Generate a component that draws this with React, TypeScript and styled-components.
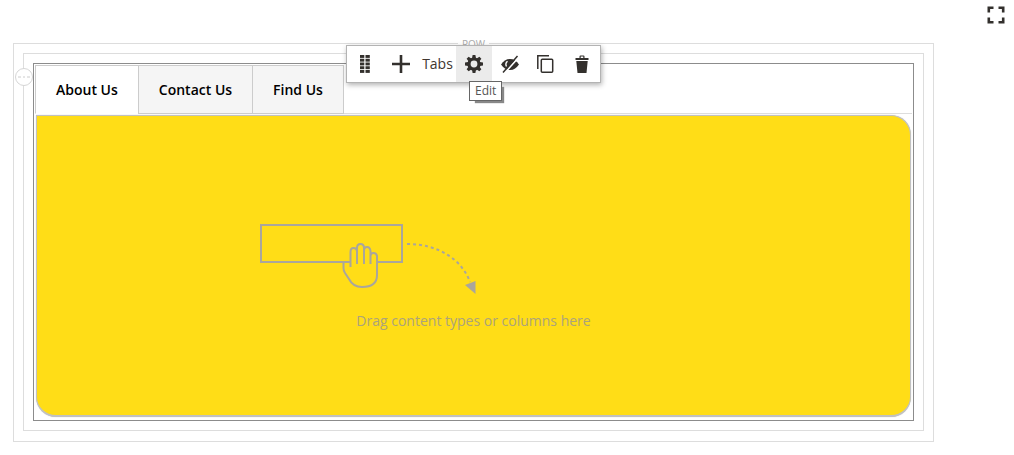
import React from "react";
import styled, { createGlobalStyle, css } from "styled-components";

const GlobalStyle = createGlobalStyle`
  *, *::before, *::after { box-sizing: border-box; }
  body {
    margin: 0;
    background: #fff;
    color: #41362f;
    font-family: "Open Sans", "Noto Sans", sans-serif;
    font-size: 14px;
    line-height: 20px;
  }
  button { font: inherit; color: inherit; cursor: pointer; }
  svg { display: block; }
`;

const Page = styled.main`
  padding: 5px 8px 14px 13px;
`;

const TopBar = styled.header`
  display: flex;
  justify-content: flex-end;
  height: 38px;
`;

const IconButton = styled.button<{ $active?: boolean }>`
  display: flex;
  align-items: center;
  justify-content: center;
  flex: none;
  width: 36px;
  height: 36px;
  padding: 0;
  border: 0;
  color: #33302d;
  background: ${(p) => (p.$active ? "#ebebeb" : "transparent")};
`;

const FullScreenButton = styled(IconButton)`
  width: 20px;
  height: 20px;
`;

const frame = css`
  position: relative;
  border: 1px solid #ddd;
`;

const RowFrame = styled.section`
  ${frame}
  margin-right: 72px;
  padding: 9px 9px 10px;
`;

const ColumnFrame = styled.div`
  ${frame}
  padding: 9px;
`;

const TabsFrame = styled.div`
  ${frame}
  border-color: #8c8c8c;
  padding: 1px 1px 3px;
`;

const centeredOver = css`
  position: absolute;
  left: 0;
  right: 0;
  width: max-content;
  margin: 0 auto;
`;

const RowLabel = styled.span`
  ${centeredOver}
  top: -6px;
  padding: 0 4px;
  background: #fff;
  color: #aaa;
  font-size: 10px;
  line-height: 12px;
`;

const RowHandle = styled.button`
  position: absolute;
  top: 14px;
  left: -9px;
  display: flex;
  align-items: center;
  justify-content: center;
  width: 18px;
  height: 18px;
  padding: 0;
  border: 1px solid #d6d6d6;
  border-radius: 50%;
  background: #fff;
  color: #ccc;
`;

const Toolbar = styled.div`
  ${centeredOver}
  z-index: 2;
  top: 1px;
  display: flex;
  align-items: center;
  border: 1px solid #b3b3b3;
  background: #fff;
  box-shadow: 1px 2px 5px rgba(0, 0, 0, 0.3);
`;

const ToolbarTitle = styled.span`
  width: 37px;
  text-align: center;
`;

const ToolSlot = styled.div`
  position: relative;
`;

const Tooltip = styled.span`
  position: absolute;
  top: 35px;
  left: 13px;
  padding: 0 5px;
  border: 1px solid #666;
  background: #fff;
  box-shadow: 4px 4px 1px -2px #888;
  color: #555;
  font-size: 12px;
  line-height: 18px;
`;

const TabList = styled.div`
  display: flex;
  border-bottom: 1px solid #ddd;
`;

const Tab = styled.button<{ $active?: boolean }>`
  height: 49px;
  margin: 0 -1px -1px 0;
  padding: 0 20px;
  border: 1px solid #ccc;
  border-bottom-color: ${(p) => (p.$active ? "#fff" : "#ccc")};
  background: ${(p) => (p.$active ? "#fff" : "#f5f5f5")};
  color: #000;
  font-weight: 600;
`;

const Panel = styled.div`
  display: flex;
  flex-direction: column;
  align-items: center;
  margin: 1px 1px 0;
  padding: 108px 20px 84px;
  border: 1px solid #c1c1c1;
  border-bottom-width: 2px;
  border-radius: 0 20px 20px 20px;
  box-shadow: 0 0 1px #bbb;
  background: #ffdd17;
  color: #aca37c;
`;

const Hint = styled.p`
  margin: 16px 0 0;
`;

const DropArt = styled.svg`
  margin-right: 212px;
`;

const Corners = () => (
  <svg width="18" height="18" viewBox="0 0 18 18" fill="none" stroke="currentColor" strokeWidth="2.6">
    <path d="M1.8 6.500V1.800H6.500M11.500 1.800h4.700V6.500M16.200 11.500v4.700H11.500M6.500 16.200H1.800V11.500" />
  </svg>
);

const Grip = () => (
  <svg width="10" height="18" viewBox="0 0 10 18" fill="currentColor">
    {[0, 3.75, 7.5, 11.25, 15].map((y) =>
      [0, 5.5].map((x) => <rect key={`${x}-${y}`} x={x} y={y} width="4.3" height="2.9" />)
    )}
  </svg>
);

const Plus = () => (
  <svg width="18" height="18" viewBox="0 0 18 18" fill="currentColor">
    <path d="M7.700 0h2.600v7.700H18v2.600h-7.700V18H7.700v-7.700H0V7.700h7.700z" />
  </svg>
);

const Gear = () => (
  <svg width="18" height="18" viewBox="0 0 18 18" fill="none" stroke="currentColor">
    <circle cx="9" cy="9" r="5" strokeWidth="3.200" />
    {[0, 45, 90, 135, 180, 225, 270, 315].map((a) => (
      <path key={a} d="M7 3.200 7.600 0h2.800l.6 3.200z" fill="currentColor" stroke="none" transform={`rotate(${a} 9 9)`} />
    ))}
  </svg>
);

const EyeOff = () => (
  <svg width="18" height="18" viewBox="0 0 18 18">
    <path d="M0 9.500C2.300 6 5.200 4 9 4s6.700 2 9 5.500C15.700 13 12.800 15 9 15S2.300 13 0 9.500z" fill="currentColor" />
    <path d="M6.500 6.200a4.300 4.300 0 0 0-1 5.300" fill="none" stroke="#fff" strokeWidth="1.400" />
    <path d="M3.300 18.300 18 2" stroke="#fff" strokeWidth="1.600" />
    <path d="M2 17.500 16.500 1" stroke="currentColor" strokeWidth="1.500" />
  </svg>
);

const Copy = () => (
  <svg width="18" height="18" viewBox="0 0 18 18" fill="none" stroke="currentColor" strokeWidth="1.500">
    <path d="M.8 14V.8H12" />
    <rect x="4.300" y="4.300" width="11.400" height="12.900" rx="1" />
  </svg>
);

const Trash = () => (
  <svg width="14" height="18" viewBox="0 0 14 18" fill="currentColor">
    <path d="M.5 3h4V1.500Q4.500.5 5.500.5h3q1 0 1 1V3h4v1.900H.5zM5.700 3h2.600V1.600H5.700zM1.300 6h11.400L11.500 18h-9z" fillRule="evenodd" />
  </svg>
);

const Dashes = () => (
  <svg width="12" height="2" viewBox="0 0 12 2" stroke="currentColor">
    <path d="M0 1h3M5 1h2M9 1h3" />
  </svg>
);

export default function App() {
  return (
    <>
      <GlobalStyle />
      <Page>
        <TopBar>
          <FullScreenButton type="button" aria-label="Full screen"><Corners /></FullScreenButton>
        </TopBar>
        <RowFrame>
          <RowLabel>ROW</RowLabel>
          <Toolbar role="toolbar" aria-label="Tabs options">
            <IconButton type="button" aria-label="Move"><Grip /></IconButton>
            <IconButton type="button" aria-label="Add"><Plus /></IconButton>
            <ToolbarTitle>Tabs</ToolbarTitle>
            <ToolSlot>
              <IconButton type="button" $active aria-describedby="edit-tip" aria-label="Edit"><Gear /></IconButton>
              <Tooltip id="edit-tip" role="tooltip">Edit</Tooltip>
            </ToolSlot>
            <IconButton type="button" aria-label="Hide"><EyeOff /></IconButton>
            <IconButton type="button" aria-label="Duplicate"><Copy /></IconButton>
            <IconButton type="button" aria-label="Remove"><Trash /></IconButton>
          </Toolbar>
          <ColumnFrame>
            <RowHandle type="button" aria-label="Row options"><Dashes /></RowHandle>
            <TabsFrame>
              <TabList role="tablist">
                <Tab type="button" role="tab" aria-selected $active>About Us</Tab>
                <Tab type="button" role="tab" aria-selected={false}>Contact Us</Tab>
                <Tab type="button" role="tab" aria-selected={false}>Find Us</Tab>
              </TabList>
              <Panel role="tabpanel">
                <DropArt width="217" height="71" viewBox="0 0 217 71" fill="none" stroke="#aaa69c" strokeWidth="2">
                  <rect x="2" y="1" width="141" height="37" />
                  <path d="M91.500 45V28q0-3.500 3-3.500t3.500-1q0-3.500 3-3.500t3.500 3q0-1 3-1t3.500 4v4q.5-1 3-1t3 3v19q0 12-15 12-9 0-13-8l-5-7V38h7z" fill="#ffdd17" stroke="none" />
                  <path d="M91.500 43V28q0-4 3-4 3.500 0 3.500 4v12V24q0-4 3.500-4t3.500 4v16V27q0-4 3-4t3.500 4v13V32q0-3 3-3t3.500 3v19q0 12-15 12-9 0-13-8l-4-6q-1.500-2-1.500-5v-6h6" />
                  <path d="M148 20C180 20 203 36 211 58" strokeDasharray="3 3" />
                  <path d="M206 61 216.500 57V70z" fill="#aaa69c" stroke="none" />
                </DropArt>
                <Hint>Drag content types or columns here</Hint>
              </Panel>
            </TabsFrame>
          </ColumnFrame>
        </RowFrame>
      </Page>
    </>
  );
}
